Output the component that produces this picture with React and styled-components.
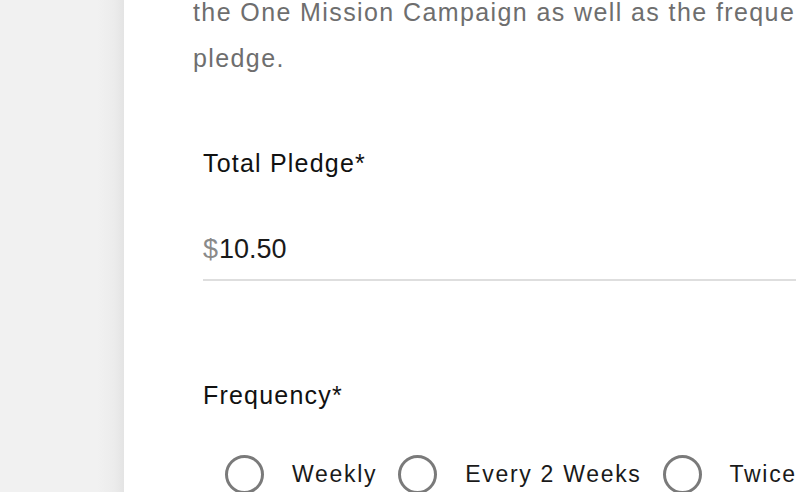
import React from 'react';
import styled, { createGlobalStyle } from 'styled-components';

const GlobalStyle = createGlobalStyle`
  html, body {
    margin: 0;
    padding: 0;
    overflow: hidden;
  }
  body {
    font-family: "Liberation Sans", Arial, Helvetica, sans-serif;
    background: #fff;
  }
`;

const Page = styled.div`
  display: flex;
  width: 796px;
  height: 492px;
  overflow: hidden;
`;

const Sidebar = styled.aside`
  flex: 0 0 124px;
  background: linear-gradient(to right, #f1f1f1 0%, #f1f1f1 78%, #ececec 92%, #e4e4e4 100%);
`;

const Main = styled.main`
  flex: 1;
  min-width: 0;
  overflow: hidden;
  padding-left: 69px;
`;

const Form = styled.div`
  width: 1000px;
  margin-top: -11px;
`;

const Intro = styled.p`
  margin: 0;
  font-size: 25px;
  line-height: 46px;
  letter-spacing: 1.4px;
  color: #6e6e6e;
  white-space: pre-line;
`;

const Field = styled.div`
  padding-left: 10px;
`;

const Label = styled.div`
  font-size: 25px;
  letter-spacing: 1.2px;
  color: #111;
  line-height: 28px;
`;

const PledgeField = styled(Field)`
  margin-top: 68px;
`;

const AmountRow = styled.div`
  display: flex;
  align-items: baseline;
  margin-top: 57px;
  padding-bottom: 14px;
  border-bottom: 2px solid #dedede;
  font-size: 27px;
  color: #1a1a1a;
`;

const Currency = styled.span`
  color: #8a8a8a;
  margin-right: 1px;
`;

const FrequencyField = styled(Field)`
  margin-top: 100px;
`;

const Options = styled.div`
  display: flex;
  align-items: center;
  margin-top: 46px;
  padding-left: 22px;
`;

const Option = styled.label`
  display: flex;
  align-items: center;
  margin-right: 21px;
`;

const Circle = styled.span`
  box-sizing: border-box;
  width: 39px;
  height: 39px;
  border-radius: 50%;
  border: 3px solid #7a7a7a;
  margin-right: 28px;
`;

const OptionText = styled.span`
  font-size: 23px;
  letter-spacing: 1.7px;
  color: #1a1a1a;
`;

const frequencies = ['Weekly', 'Every 2 Weeks', 'Twice a Month', 'Monthly'];

export default function App() {
  return (
    <>
      <GlobalStyle />
      <Page>
        <Sidebar />
        <Main>
          <Form>
            <Intro>
              {'the One Mission Campaign as well as the frequency of your\npledge.'}
            </Intro>
            <PledgeField>
              <Label>Total Pledge*</Label>
              <AmountRow>
                <Currency>$</Currency>
                <span>10.50</span>
              </AmountRow>
            </PledgeField>
            <FrequencyField>
              <Label>Frequency*</Label>
              <Options>
                {frequencies.map((f) => (
                  <Option key={f}>
                    <Circle />
                    <OptionText>{f}</OptionText>
                  </Option>
                ))}
              </Options>
            </FrequencyField>
          </Form>
        </Main>
      </Page>
    </>
  );
}
